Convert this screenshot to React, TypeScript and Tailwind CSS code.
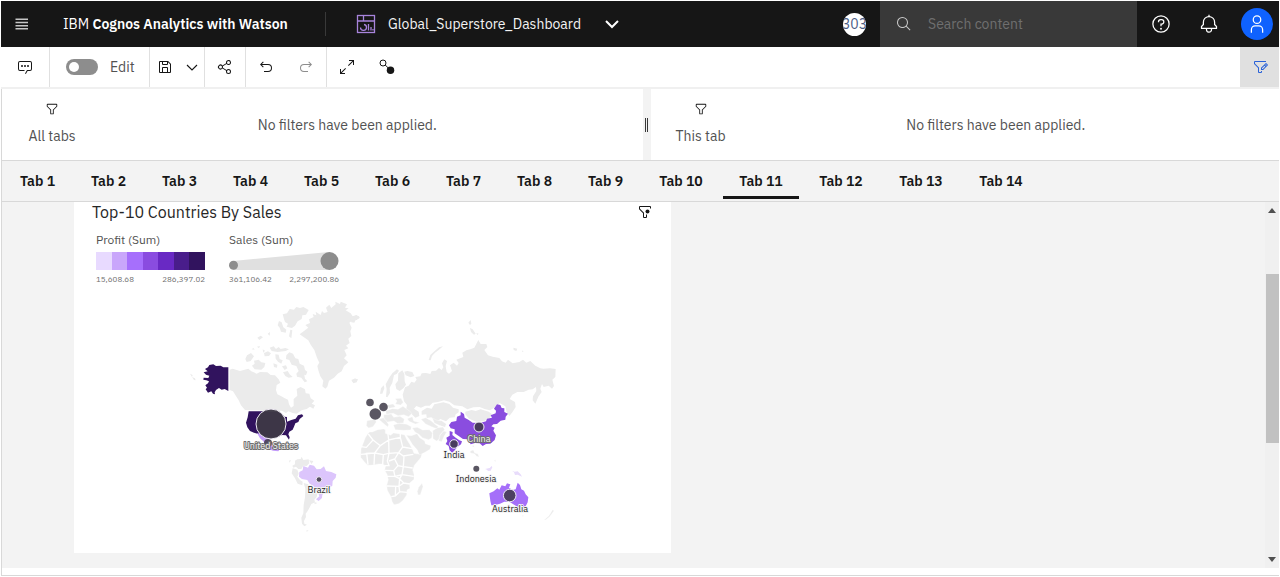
import type { ReactNode } from "react";

type IconProps = { size?: string; children: ReactNode; className?: string };

function Icon({ size = "size-4", className = "", children }: IconProps) {
  return (
    <svg viewBox="0 0 32 32" fill="currentColor" aria-hidden="true" className={`${size} shrink-0 ${className}`}>
      {children}
    </svg>
  );
}

const FILTER_PATH =
  "M18,28H14a2,2,0,0,1-2-2V18.41L4.59,11A2,2,0,0,1,4,9.59V6A2,2,0,0,1,6,4H26a2,2,0,0,1,2,2V9.59A2,2,0,0,1,27.41,11L20,18.41V26A2,2,0,0,1,18,28ZM6,6V9.59l8,8V26h4V17.59l8-8V6Z";
const UNDO_PATH =
  "M20,10H7.8149l3.5874-3.5859L10,5,4,11,10,17l1.4023-1.4146L7.8179,12H20a6,6,0,0,1,0,12H12v2h8a8,8,0,0,0,0-16Z";

function Header() {
  return (
    <header className="flex h-[46px] shrink-0 items-center bg-[#161616] text-white">
      <button aria-label="Open menu" className="flex h-full w-[42px] items-center justify-center text-[#c6c6c6]">
        <svg viewBox="0 0 14 12" fill="currentColor" className="h-3 w-3.5" aria-hidden="true">
          <path d="M0.500 0.500h12.500v1.500H0.500zM0.500 3.700h12.500v1.500H0.500zM0.500 6.900h12.500v1.500H0.500zM0.500 10.100h12.500v1.500H0.500z" />
        </svg>
      </button>
      <div className="flex h-6 w-[283px] items-center border-r border-[#393939] pl-5 text-sm">
        <span className="whitespace-pre">
          IBM <b className="font-semibold">Cognos Analytics with Watson</b>
        </span>
      </div>
      <button className="ml-[30px] flex items-center text-sm text-[#f4f4f4]">
        <svg viewBox="0 0 20 20" fill="none" stroke="#a884dc" strokeWidth="1.3" className="mr-3 size-5" aria-hidden="true">
          <rect x="1.5" y="1.500" width="17" height="17" />
          <path d="M1.500 7h17M7.500 1.500V7M8 10.500a3 3 0 1 1-3.500 3M12.500 10v6.500M15 13V16.500M17 15v1.500" />
        </svg>
        <span className="w-[216px] text-left">Global_Superstore_Dashboard</span>
        <svg viewBox="0 0 16 16" fill="none" stroke="white" strokeWidth="2" className="size-4" aria-hidden="true">
          <path d="M2 5l6 6 6-6" />
        </svg>
      </button>
      <div className="flex-1" />
      <div className="mr-3.5 flex size-[23px] items-center justify-center overflow-hidden rounded-full bg-white text-sm text-[#4a5c85]">
        303
      </div>
      <label className="flex h-full w-[257px] items-center bg-[#393939] pl-4">
        <Icon className="text-[#c6c6c6]">
          <path d="M29,27.5859l-7.5521-7.5521a11.0177,11.0177,0,1,0-1.4141,1.4141L27.5859,29ZM4,13a9,9,0,1,1,9,9A9.01,9.01,0,0,1,4,13Z" />
        </Icon>
        <input
          type="search"
          aria-label="Search content"
          placeholder="Search content"
          className="ml-4 min-w-0 flex-1 bg-transparent text-sm outline-none placeholder:text-[#6f6f6f]"
        />
      </label>
      <button aria-label="Help" className="flex w-12 justify-center">
        <Icon size="size-5">
          <path d="M16,2A14,14,0,1,0,30,16,14,14,0,0,0,16,2Zm0,26A12,12,0,1,1,28,16,12,12,0,0,1,16,28Z" />
          <circle cx="16" cy="23.5" r="1.5" />
          <path d="M17,8H15.5A4.49,4.49,0,0,0,11,12.5V13h2v-.5A2.5,2.5,0,0,1,15.5,10H17a2.5,2.5,0,0,1,0,5H15v4.5h2V17a4.5,4.5,0,0,0,0-9Z" />
        </Icon>
      </button>
      <button aria-label="Notifications" className="flex w-12 justify-center">
        <Icon size="size-5">
          <path d="M28.7071,19.293,26,16.5859V13a10.0136,10.0136,0,0,0-9-9.9492V1H15V3.0508A10.0136,10.0136,0,0,0,6,13v3.5859L3.2929,19.293A1,1,0,0,0,3,20v3a1,1,0,0,0,1,1h7v.7768a5.152,5.152,0,0,0,4.5,5.1987A5.0057,5.0057,0,0,0,21,25V24h7a1,1,0,0,0,1-1V20A1,1,0,0,0,28.7071,19.293ZM19,25a3,3,0,0,1-6,0V24h6Zm8-3H5V20.4141L7.707,17.707A1,1,0,0,0,8,17V13a8,8,0,0,1,16,0v4a1,1,0,0,0,.293.707L27,20.4141Z" />
        </Icon>
      </button>
      <button aria-label="Profile" className="mr-1.5 ml-2 flex size-8 items-center justify-center rounded-full bg-[#0f62fe]">
        <Icon size="size-5">
          <path d="M16,4a5,5,0,1,1-5,5,5,5,0,0,1,5-5m0-2a7,7,0,1,0,7,7A7,7,0,0,0,16,2Z" />
          <path d="M26,30H24V25a5,5,0,0,0-5-5H13a5,5,0,0,0-5,5v5H6V25a7,7,0,0,1,7-7h6a7,7,0,0,1,7,7Z" />
        </Icon>
      </button>
    </header>
  );
}

function Toolbar() {
  return (
    <div className="flex h-[42px] shrink-0 border-b-2 border-[#f0f0f0] text-[#161616]">
      <button aria-label="Comments" className="flex w-[49px] items-center justify-center border-r border-[#e0e0e0]">
        <Icon>
          <path d="M17.74,30,16,29l4-7h6a2,2,0,0,0,2-2V8a2,2,0,0,0-2-2H6A2,2,0,0,0,4,8V20a2,2,0,0,0,2,2h9v2H6a4,4,0,0,1-4-4V8A4,4,0,0,1,6,4H26a4,4,0,0,1,4,4V20a4,4,0,0,1-4,4H21.16Z" />
          <circle cx="10" cy="14" r="2" />
          <circle cx="16" cy="14" r="2" />
          <circle cx="22" cy="14" r="2" />
        </Icon>
      </button>
      <label className="flex w-[100px] items-center gap-3 border-r border-[#e0e0e0] pl-4 text-sm text-[#525252]">
        <input
          type="checkbox"
          role="switch"
          className="h-4 w-8 appearance-none rounded-full bg-[#8d8d8d] p-[3px] before:block before:size-2.5 before:rounded-full before:bg-white checked:bg-[#198038] checked:before:ml-4"
        />
        Edit
      </label>
      <div className="flex w-[55px] items-center justify-between border-r border-[#e0e0e0] pr-1.5 pl-[7px]">
        <button aria-label="Save">
          <Icon>
            <path d="M27.71,9.29l-5-5A1,1,0,0,0,22,4H6A2,2,0,0,0,4,6V26a2,2,0,0,0,2,2H26a2,2,0,0,0,2-2V10A1,1,0,0,0,27.71,9.29ZM12,6h8v4H12Zm8,20H12V18h8Zm2,0V18a2,2,0,0,0-2-2H12a2,2,0,0,0-2,2v8H6V6h4v4a2,2,0,0,0,2,2h8a2,2,0,0,0,2-2V6.41l4,4V26Z" />
          </Icon>
        </button>
        <button aria-label="Save options">
          <svg viewBox="0 0 12 12" fill="none" stroke="currentColor" strokeWidth="1.1" className="size-3" aria-hidden="true">
            <path d="M1 4L6 9l5-5" />
          </svg>
        </button>
      </div>
      <button aria-label="Share" className="flex w-[41px] items-center justify-center border-r border-[#e0e0e0]">
        <Icon>
          <path d="M23,20a5,5,0,0,0-3.89,1.89L11.8,17.32a4.46,4.46,0,0,0,0-2.64l7.31-4.57A5,5,0,1,0,18,7a4.79,4.79,0,0,0,.2,1.32l-7.31,4.57a5,5,0,1,0,0,6.22l7.31,4.57A4.79,4.79,0,0,0,18,25a5,5,0,1,0,5-5ZM23,4a3,3,0,1,1-3,3A3,3,0,0,1,23,4ZM7,19a3,3,0,1,1,3-3A3,3,0,0,1,7,19Zm16,9a3,3,0,1,1,3-3A3,3,0,0,1,23,28Z" />
        </Icon>
      </button>
      <div className="flex w-[81px] items-center border-r border-[#e0e0e0]">
        <button aria-label="Undo" className="flex w-10 justify-center">
          <Icon>
            <path d={UNDO_PATH} />
          </Icon>
        </button>
        <button aria-label="Redo" disabled className="flex w-10 justify-center text-[#8d8d8d]">
          <Icon>
            <path transform="matrix(-1 0 0 1 32 0)" d={UNDO_PATH} />
          </Icon>
        </button>
      </div>
      <button aria-label="Full screen" className="flex w-10 items-center justify-center">
        <Icon>
          <path d="M20 2v2h6.586L18 12.582 19.414 14 28 5.414V12h2V2zM14 19.416 12.592 18 4 26.586V20H2v10h10v-2H5.414z" />
        </Icon>
      </button>
      <button aria-label="Connections" className="flex w-10 items-center justify-center">
        <Icon>
          <circle cx="8" cy="8" r="6" fill="none" stroke="currentColor" strokeWidth="2" />
          <path d="M12.500 12l6 6" stroke="currentColor" strokeWidth="2" />
          <circle cx="23" cy="22.500" r="7.500" />
        </Icon>
      </button>
      <div className="flex-1" />
      <button aria-label="Edit filters" className="flex w-[39px] items-center justify-center bg-[#e0e0e0] pl-0.5 text-[#2a62d8]">
        <Icon>
          <path d="M26 6H4v3.170l7.410 7.410.590.590V26h4v-2h2v2a2 2 0 0 1-2 2h-4a2 2 0 0 1-2-2v-8L2.590 10.590A2 2 0 0 1 2 9.170V6a2 2 0 0 1 2-2h22z" />
          <path d="M29.710 11.290l-3-3a1 1 0 0 0-1.420 0L16 17.590V22h4.410l9.300-9.290a1 1 0 0 0 0-1.420zM19.590 20H18v-1.590l5-5L24.590 15zM26 13.590L24.410 12 26 10.410 27.590 12z" />
        </Icon>
      </button>
    </div>
  );
}

type FilterPaneProps = { label: string; grow: string; messageInset: string };

function FilterPane({ label, grow, messageInset }: FilterPaneProps) {
  return (
    <section className={`flex min-w-0 bg-white ${grow}`}>
      <div className="flex w-[100px] shrink-0 flex-col items-center pt-[13px] text-sm text-[#525252]">
        <Icon size="size-3.5" className="text-[#161616]">
          <path d={FILTER_PATH} />
        </Icon>
        <span className="mt-2.5 leading-5">{label}</span>
      </div>
      <p className={`flex-1 pt-[26px] text-center text-sm leading-5 text-[#525252] ${messageInset}`}>
        No filters have been applied.
      </p>
    </section>
  );
}

const tabs = Array.from({ length: 14 }, (_, i) => i + 1);

function TabBar() {
  return (
    <nav role="tablist" className="flex h-[42px] shrink-0 gap-1 border-y border-[#d8d8d8] bg-[#f3f3f3] pl-0.5">
      {tabs.map((n) => (
        <button
          key={n}
          role="tab"
          aria-selected={n === 11}
          className={`mb-0.5 border-b-3 pt-[5px] text-sm font-semibold text-[#161616] ${n > 9 ? "w-[76px]" : "w-[67px]"} ${n === 11 ? "border-[#161616]" : "border-transparent"}`}
        >
          Tab {n}
        </button>
      ))}
    </nav>
  );
}

const scale = ["bg-[#e8daff]", "bg-[#c9a6fb]", "bg-[#a66ffc]", "bg-[#8a4ce0]", "bg-[#6929c4]", "bg-[#491d8b]", "bg-[#31135e]"];

function Legends() {
  return (
    <div className="mt-[9px] flex gap-6 pl-[22px] text-xs text-[#525252]">
      <div className="w-[109px]">
        <div className="leading-4">Profit (Sum)</div>
        <div className="mt-1 flex h-[18px]">
          {scale.map((c) => (
            <span key={c} className={`flex-1 ${c}`} />
          ))}
        </div>
        <div className="mt-[3px] flex justify-between text-[8px] leading-3 text-[#6f6f6f]">
          <span>15,608.68</span>
          <span>286,397.02</span>
        </div>
      </div>
      <div className="w-[110px]">
        <div className="leading-4">Sales (Sum)</div>
        <svg viewBox="0 0 110 18" className="mt-1 h-[18px] w-full" aria-hidden="true">
          <path d="M4 9L100 0v18H4z" fill="#e0e0e0" />
          <circle cx="4.500" cy="13.300" r="4.500" fill="#8d8d8d" />
          <circle cx="100.500" cy="9" r="9" fill="#8d8d8d" />
        </svg>
        <div className="mt-[3px] flex justify-between text-[8px] leading-3 text-[#6f6f6f]">
          <span>361,106.42</span>
          <span>2,297,200.86</span>
        </div>
      </div>
    </div>
  );
}

const northAmerica = [
  "M149 224L158 221 180 228 205 221 214 229 230 236 240 231 262 232 272 240 285 241 296 253 301 263 290 270 288 285 292 298 304 304 313 309 324 314 327 328 333 338 341 333 341 312 352 302 350 282 362 276 375 283 377 295 388 296 392 310 403 317 395 326 405 331 400 341 390 335 380 342 365 346 350 356 338 354 325 349 318 354 306 347 195 345 183 331 176 316 166 300 159 289 149 285Z",
  "M201 181l12-7 9 10-10 14-12 3-4-9zM222 197l14-3 8 8 12 2-3 12-9 8-20-1-8-11 8-6zM269 158l12-4 7 8 8-6 6 6 14-3 11 4-10 5-24 3-18-3zM286 178l10 1 3 13 9 4-4 10-10-6-7-9zM252 174l12-5 9 6-6 8-13 1zM280 205l12 4-1 9-9-2zM231 155l9-2-3 7zM232 128l10-6 7 5-11 8zM215 163l5-4 4 5zM248 163l7 4-5 6z",
  "M319 181l9-9 11 4 7 14 9 2 4 14 13 6 3 13 7 5-4 11-5-2 2 12 7 8-8 3-10-14-13-3-2-9 7-8-7-15-14-4-7-14-10-3zM306 214l12-3 4 9-8 5zM309 232l14-4 6 10 9 8-12 2-10-5zM351 286l8-8 4 6-9 5z",
  "M312 72l-4-14 13-3 8-13 13 2 7-8 11 3 10-3 16 9-8 14-11 2-2 11-12 7-8 13-9 7-16-4 4-9-9-5zM297 78l8 4 5 15 9 7-2 9-14-3-4-12-6-7zM331 104l6 2-3 24-7-6zM263 116l7-5-1 11z",
  "M30 236l8 4-2 6zM36 246l9 4 2 6-5-1z",
  "M517 258l10-7 7 2-4 9-10 3z",
];
const greenland =
  "M359 118L385 98 376 90 390 84 387 73 401 66 398 57 409 61 407 50 422 60 426 48 432 54 443 51 438 38 448 29 454 39 467 28 466 20 480 27 482 20 501 28 495 38 506 40 497 46 512 55 518 64 529 60 539 68 530 75 516 77 508 83 515 98 511 109 514 123 505 131 509 144 498 152 505 160 493 165 500 181 492 190 505 202 492 213 485 229 473 236 462 248 447 257 442 275 436 281 427 274 430 257 421 244 415 226 412 213 418 203 411 188 403 165 392 149 385 136 374 128Z";

const southAmerica = [
  "M345 182L352 178 362 177 365 170 370 180 386 178 388 190 380 198 370 197 364 207 355 207 348 200 340 203 337 197 345 193Z",
  "M338 205l14 4 4 12-4 9 8 10 8 5-1 11-14-5-8-16-10-15z",
  "M371 249l14 4 2 11 13 7 12 11-2 9-7 8 2 8-11 5-6 12-5 9-6 8 1 10-6 12 1 8 8 3-8 5-7-8-2-18 6-13 1-25 4-23 1-26z",
  "M387 181l13 2-5 9zM403 306l9 3-8 4zM378 392l8-2-5 5zM327 182l6-2-4 8z",
];

const eurasia = [
  "M158 284L165 262 176 257 184 245 193 248 200 239 196 231 211 229 215 220 228 219 241 222 245 213 258 212 267 204 275 210 280 202 276 190 283 178 291 183 287 199 290 216 297 221 306 213 300 196 311 188 321 197 326 189 319 179 340 171 337 158 349 151 361 148 373 143 385 120 392 132 409 132 412 141 403 150 414 166 428 170 448 174 456 184 467 188 474 179 488 190 508 186 519 179 529 188 541 183 556 197 571 205 580 206 600 205 617 207 616 231 607 239 612 258 606 266 596 257 581 261 576 252 571 266 575 276 565 290 556 311 548 301 549 289 559 273 558 261 548 268 536 269 521 276 502 276 487 284 479 297 495 306 497 321 487 337 478 348 470 336 466 319 449 309 435 322 420 331 404 327 389 321 370 322 352 328 337 319 313 316 298 305 282 301 264 306 248 308 239 317 226 317 213 323 199 318 192 326 206 335 208 348 196 353 182 339 168 329 171 315 162 304Z",
  "M215 333L231 323 245 326 253 313 280 307 298 312 309 323 326 328 326 337 317 343 314 352 299 353 288 364 271 357 259 365 244 352 230 354 229 343 215 344Z",
  "M346 335l19-5 12 3 15-5 24 7 11 8-8 11-18 10-22 1-22-9-11-13z",
  "M108 290l2-23-3-14 12-22 8-11 14-12 6 4-7 10-8 3-5 23-8 15 1 16-8 13zM139 267l-3-14 8-11 1-22 12-9 6 11 1 22 4 10-8 11-11 8zM172 213l15 3 6 12-11 4-15-6-4-11zM90 281l3-16 8-9 2 9-6 16z",
  "M236 180l5-15 14-13 12-10 12-3-13 11-11 8-9 10-4 13zM355 68l7-8 2 11-4 4zM360 84l8 4 9 13-5 3-9-8zM379 99l7 2-4 4zM490 143l12 3-3 7-8-3zM516 151l5 4-4 1zM4 240l12-5 4 6-10 8zM2 59l11-4 5-9 9 3 2 5-12 5-4 9-9-1z",
];

const southernLands = [
  "M46 143L53 132 59 126 67 126 83 119 101 117 106 119 106 130 122 136 130 129 151 132 164 135 170 148 180 164 188 180 192 190 205 192 216 189 213 202 202 215 193 226 188 240 192 253 192 268 178 280 180 295 171 300 170 315 158 332 146 341 132 344 126 334 123 320 112 301 110 286 115 269 111 253 104 241 107 227 98 222 88 222 70 225 53 226 43 215 32 202 33 177Z",
  "M206 292l10-12 3 10-8 24-7 1-2-11z",
  "M169 136l15 1 17-6 8 12 15 10 2 8 17 6-3 11-15 9-17 8-6-15-15-17-9-15z",
  "M130 105l18-5 22 3 14 7-2 10-23 1-23-2zM187 114l15-2 16 8 20-1 9 10-2 15-9 5-19-6-10-10-12-7zM213 88l14-5 16 9 12 11 10 7-5 6-15-6-18-8zM247 84l14 7 14 1 14 10-4 10-17-6-15-7zM248 122l15-9 16-2 5 8-13 14-3 14-8 6-11-7zM269 136l12-13 9 3-8 13-7 16-9-3zM172 86l15-6 4 13 18 5-13 4-19-8z",
  "M51 92l24-4 4 8-10 14-13 4-7-7zM86 88l15-5 7 8 8 13-3 6-8-6-12-10zM101 74l23-2 7 10 19-3 13 8-3 12-18 1-10-7-20 3-10-9zM107 63l20-7 17 2 15-9 18 13 9 8-10 10-15-6-17 3-14-7-21 3zM110 45l20-3 6 9-18 4zM135 26l18-1 7 12-8 8-16-3 5-9z",
  "M361 183l9-3 4 9 10 3 3 9-7-2-7-8-12-2zM365 168l6-2 2 6zM582 390l15-13 11-18 4 3-13 18-12 9zM518 374l3 4-4 2zM432 212l4-3 2 6z",
];

const africaBorders =
  "M55 132l14 18-20 22-16-2M69 150l22 17 25-17-4-33M116 150l35-8 0-12M91 167l-17 22-27 1M33 193l41-4 26 5 17-4-1-40M117 190l29-2 12-17-7-29M158 171l28 5M146 188l14 10 30-5M50 190l4 34M74 189l-2 35M100 194l-2 28M117 190l-5 23 5 14h-12M117 213l17-6 12-19M134 207l10 20 16 3 2-32M160 230l-4 24-21 5-4-17-27-1M144 227l-13 15M160 230l28 4M156 254l35 5M111 259l24 0 14 7 7-12M149 266l-2 23-37-1M147 289l14-10 18 3M161 279l-12-13M147 289l2 16 22 2M124 320l12-2 1-29M149 305l-13 13";

type Bubble = { x: number; y: number; r: number; halo?: boolean };
const bubbles: Bubble[] = [
  { x: 268, y: 443, r: 4 },
  { x: 271, y: 424, r: 15, halo: true },
  { x: 370, y: 402.5, r: 3.8 },
  { x: 383.5, y: 407, r: 4.3 },
  { x: 375.3, y: 414, r: 5.8 },
  { x: 479, y: 427, r: 5, halo: true },
  { x: 454, y: 444, r: 4.3, halo: true },
  { x: 476.3, y: 468.7, r: 3 },
  { x: 319, y: 479.5, r: 2.8, halo: true },
  { x: 509.7, y: 495.5, r: 6.3, halo: true },
];

const countryLabels = [
  { name: "United States", x: 271, y: 449, inverse: true },
  { name: "Brazil", x: 319, y: 493 },
  { name: "China", x: 479, y: 442, inverse: true },
  { name: "India", x: 454, y: 458 },
  { name: "Indonesia", x: 476, y: 482 },
  { name: "Australia", x: 510, y: 512 },
];

function WorldMap() {
  return (
    <svg viewBox="180 295 390 240" role="img" aria-label="Sales and profit by country" className="mt-2.5 ml-[106px] h-[240px] w-[390px]">
      <g fill="#ebebeb">
        <g transform="translate(180 295) scale(0.33333)">
          {northAmerica.map((d) => (
            <path key={d} d={d} />
          ))}
          <path d={greenland} />
          <path
            d="M75 222L84 217 88 210 100 208 108 213 122 212 130 217 145 217V288L134 282 125 284 117 279 108 285 104 292 105 298 99 296 94 289 84 293 77 283 81 278 76 271 84 265 87 259 79 256 70 254 71 248 85 249 88 242 78 239 71 232 83 229Z"
            fill="#31135e"
          />
        </g>
        <g transform="translate(180 400) scale(0.33333)">
          {southAmerica.map((d) => (
            <path key={d} d={d} />
          ))}
          <path
            d="M206 34H243L300 36 313 50 321 51 321 65 334 60 347 56 354 46 366 43 370 48 359 57 355 66 346 70 342 80 338 89 328 95 325 103 329 112 327 119 318 106 306 105 292 111 274 112 255 109 238 103 222 98 210 93 202 82 198 68 203 52Z"
            fill="#31135e"
          />
          <path d="M231 99L245 103 256 109 267 115 271 132 281 141 292 139 296 147 302 144 295 154 279 152 263 146 257 135 250 124 240 115Z" fill="#c39bfa" />
          <path
            d="M358 216L368 211 370 198 384 203 389 194 402 197 410 208 422 207 432 199 438 213 454 216 469 223 467 233 458 243 457 257 443 266 436 275 427 284 426 294 416 303 408 298 418 289 414 277 404 271 401 258 389 251 382 240 366 237 357 230Z"
            fill="#dcc5fc"
          />
        </g>
        <g transform="translate(350 300) scale(0.33333)">
          {eurasia.map((d) => (
            <path key={d} d={d} />
          ))}
        </g>
        <g transform="translate(350 390) scale(0.33333)">
          {southernLands.map((d) => (
            <path key={d} d={d} stroke="white" strokeWidth="1" />
          ))}
          <path d={africaBorders} fill="none" stroke="white" strokeWidth="4" />
          <path
            d="M297 106L304 96 319 93 321 80 332 76 332 65 342 72 344 83 355 89 368 98 390 99 408 94 411 86 426 83 422 76 437 70 438 62 432 56 441 43 451 45 455 54 463 55 463 66 474 71 467 80 466 89 452 92 441 102 430 103 424 109 434 113 430 122 438 136 434 150 421 161 408 162 398 168 389 160 375 159 362 163 354 148 339 147 325 137 314 130 314 118 302 115Z"
            fill="#8a4ddf"
          />
          <path d="M299 123L308 126 307 135 317 143 328 151 336 154 333 163 322 171 313 182 306 188 299 181 296 168 287 162 292 153 289 143 299 137Z" fill="#8a4ddf" />
          <path
            d="M418 310L431 304 442 295 448 299 455 286 466 289 471 280 481 283 477 293 488 300 497 298 503 278 510 285 514 298 522 302 527 313 535 322 533 337 527 349 515 354 503 351 490 343 479 336 463 335 450 341 435 345 424 346 421 332Z"
            fill="#a56ff9"
          />
          <path d="M405 237l14-3 6-6 2 4-5 10-8 1-3-4zM486 242l8 3 9-1 9 9 4 7-13-6-8 1-3-8z" fill="#e8dcfb" />
        </g>
      </g>
      {bubbles.map((b) => (
        <circle
          key={`${b.x}-${b.y}`}
          cx={b.x}
          cy={b.y}
          r={b.r}
          fill="#3d3846"
          fillOpacity={b.r > 10 ? 0.96 : 0.85}
          stroke={b.halo ? "#eeeaf3" : "none"}
          strokeWidth="1"
        />
      ))}
      {countryLabels.map((l) => (
        <text
          key={l.name}
          x={l.x}
          y={l.y}
          textAnchor="middle"
          paintOrder="stroke"
          strokeLinejoin="round"
          strokeWidth="2"
          className={l.inverse ? "fill-[#f4f4f4] stroke-[#6f6f6f] text-[9px]" : "fill-[#262626] stroke-[#f4f4f4] text-[9px]"}
        >
          {l.name}
        </text>
      ))}
    </svg>
  );
}

function Canvas() {
  return (
    <main className="flex min-h-0 flex-1 overflow-hidden bg-[#f3f3f3]">
      <div className="min-w-0 flex-1 overflow-hidden pb-[15px] pl-[72px]">
        <article className="h-full w-[597px] bg-white">
          <div className="flex items-start justify-between pr-[18px] pl-[18px]">
            <h2 className="text-base leading-[21px] text-[#262626]">Top-10 Countries By Sales</h2>
            <button aria-label="Widget filters" className="pt-0.5">
              <Icon className="text-[#161616]">
                <path d="M18 28h-4a2 2 0 0 1-2-2v-7.590L4.590 11A2 2 0 0 1 4 9.590V6a2 2 0 0 1 2-2h20a2 2 0 0 1 2 2v3h-2V6H6v3.590l8 8V26h4v-5h2v5a2 2 0 0 1-2 2z" />
                <circle cx="21" cy="15" r="4" />
              </Icon>
            </button>
          </div>
          <Legends />
          <WorldMap />
        </article>
      </div>
      <div role="scrollbar" aria-controls="root" aria-valuenow={30} aria-label="Vertical" className="flex w-3.5 flex-col items-center bg-[#f0f0f0] py-1.5 text-[#505050]">
        <svg viewBox="0 0 8 5" className="h-[5px] w-2" fill="currentColor" aria-hidden="true">
          <path d="M0 5l4-5 4 5z" />
        </svg>
        <div className="grow-[61]" />
        <div className="h-[169px] w-full border-l border-[#f0f0f0] bg-[#c1c1c1]" />
        <div className="grow-[114]" />
        <svg viewBox="0 0 8 5" className="h-[5px] w-2" fill="currentColor" aria-hidden="true">
          <path d="M0 0l4 5 4-5z" />
        </svg>
      </div>
    </main>
  );
}

export default function App() {
  return (
    <div className="flex h-screen min-h-[560px] flex-col bg-white p-px font-['IBM_Plex_Sans','Roboto',sans-serif]">
      <Header />
      <Toolbar />
      <div className="flex min-h-0 flex-1 flex-col border-b border-l border-[#d8d8d8] pb-[7px]">
        <div className="flex h-[71px] shrink-0">
          <FilterPane label="All tabs" grow="flex-[641]" messageInset="pr-[50px]" />
          <div role="separator" aria-orientation="vertical" className="flex w-2 shrink-0 items-center justify-center gap-px bg-[#f3f3f3]">
            <span className="h-3.5 w-px bg-[#393939]" />
            <span className="h-3.5 w-px bg-[#393939]" />
          </div>
          <FilterPane label="This tab" grow="flex-[629]" messageInset="pr-[38px]" />
        </div>
        <TabBar />
        <Canvas />
      </div>
    </div>
  );
}
